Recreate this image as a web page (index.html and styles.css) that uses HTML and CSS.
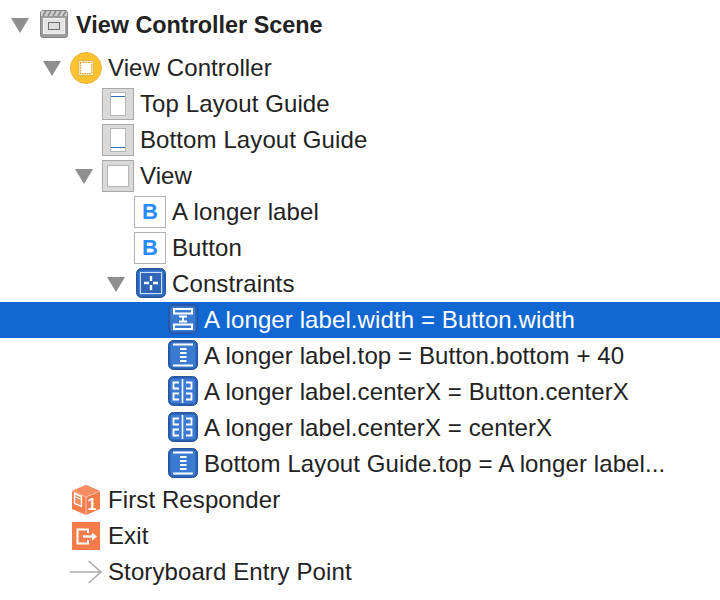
FILE: index.html
```html
<!DOCTYPE html>
<html lang="en">
<head>
  <meta charset="UTF-8">
  <title>Document Outline</title>
  <link rel="stylesheet" href="styles.css">
</head>
<body>
  <svg class="defs" width="0" height="0">
    <symbol id="scene" viewBox="0 0 32 32">
      <rect x="2.5" y="1.5" width="27" height="27" rx="2.5" fill="#9c9c9c" stroke="#858585"/>
      <rect x="3" y="2" width="26" height="5" fill="#cfcfcf"/>
      <path d="M5 7l3-5M10 7l3-5M15 7l3-5M20 7l3-5M25 7l3-5" stroke="#8a8a8a" stroke-width="1.6"/>
      <rect x="5.5" y="9.5" width="21" height="15" fill="#e4e4e4" stroke="#f2f2f2"/>
      <rect x="10.5" y="13.5" width="11" height="7" fill="#dcdcdc" stroke="#6f6f6f"/>
    </symbol>
    <symbol id="vc" viewBox="0 0 32 32">
      <circle cx="16" cy="16" r="15.5" fill="#fdc22e" stroke="#e9b64a"/>
      <rect x="8.5" y="8.5" width="15" height="15" fill="#f3e2ad" stroke="#e3b84f"/>
      <rect x="10.5" y="10.5" width="11" height="11" fill="#fff" stroke="#e8a21f" stroke-dasharray="1.5 1"/>
    </symbol>
    <symbol id="guide-top" viewBox="0 0 32 32">
      <rect x="0.5" y="0.5" width="31" height="31" fill="#d9d9d9" stroke="#a9a9a9"/>
      <rect x="8.5" y="4.5" width="15" height="23" fill="#fff" stroke="#b5b5b5"/>
      <path d="M9 8.500h14" stroke="#2f6fae"/>
    </symbol>
    <symbol id="guide-bottom" viewBox="0 0 32 32">
      <rect x="0.5" y="0.5" width="31" height="31" fill="#d9d9d9" stroke="#a9a9a9"/>
      <rect x="8.5" y="4.5" width="15" height="23" fill="#fff" stroke="#b5b5b5"/>
      <path d="M9 23.500h14" stroke="#2f6fae"/>
    </symbol>
    <symbol id="view" viewBox="0 0 32 32">
      <rect x="0.5" y="0.5" width="31" height="31" fill="#d9d9d9" stroke="#a9a9a9"/>
      <rect x="5.5" y="5.5" width="21" height="21" fill="#fff" stroke="#b5b5b5"/>
    </symbol>
    <symbol id="tile" viewBox="0 0 32 32">
      <rect x="2.5" y="0.5" width="29" height="29" rx="5" fill="#2a5fb0" stroke="#2555a0"/>
      <rect x="4.5" y="2.5" width="25" height="25" rx="2" fill="#3c7bd2"/>
    </symbol>
    <symbol id="folder" viewBox="0 0 32 32">
      <use href="#tile"/>
      <rect x="6.500" y="4.500" width="21" height="21" fill="#2f66b8" stroke="#cfe0f6"/>
      <path d="M17 8v5M17 17v5M10 15h5M19 15h5" stroke="#fff" stroke-width="2.400"/>
    </symbol>
    <symbol id="c-width" viewBox="0 0 32 32">
      <use href="#tile"/>
      <path d="M8 5h18v4.500H8zM8 20.500h18V25H8z" fill="#3c7bd2" stroke="#fff" stroke-width="2"/>
      <path d="M13 12.500h8M13 17.500h8M17 12v6" stroke="#fff" stroke-width="1.800"/>
    </symbol>
    <symbol id="c-height" viewBox="0 0 32 32">
      <use href="#tile"/>
      <path d="M7 4.500h20M7 25.500h20" stroke="#fff" stroke-width="1.800"/>
      <path d="M14 9h6.500M14 13h6.500M14 17h6.500M14 21h6.500" stroke="#fff" stroke-width="1.800"/>
    </symbol>
    <symbol id="c-center" viewBox="0 0 32 32">
      <use href="#tile"/>
      <path d="M16.500 3v24" stroke="#fff" stroke-width="1.600"/>
      <path d="M13 6.500H7.500v6H13M13 17.500H7.500v6H13M20 6.500h5.500v6H20M20 17.500h5.500v6H20" fill="none" stroke="#fff" stroke-width="1.800"/>
    </symbol>
    <symbol id="exit" viewBox="0 0 32 32">
      <rect x="2" y="2" width="28" height="28" fill="#f47c4b"/>
      <path d="M18 13V9.500H7.500v14H18V20" fill="none" stroke="#fff" stroke-width="2"/>
      <path d="M13 16.500h11" stroke="#fff" stroke-width="2.400"/>
      <path d="M22 12.500l5 4-5 4z" fill="#fff"/>
    </symbol>
    <symbol id="entry" viewBox="0 0 32 32">
      <path d="M0 16h31M18.500 5L31 16 18.500 27" fill="none" stroke="#adadad" stroke-width="1.600"/>
    </symbol>
  </svg>

  <ul class="outline">
    <li class="row scene lvl-0"><span class="toggle"></span><svg class="icon"><use href="#scene"/></svg><span class="name">View Controller Scene</span></li>
    <li class="row lvl-1"><span class="toggle"></span><svg class="icon"><use href="#vc"/></svg><span class="name">View Controller</span></li>
    <li class="row lvl-2"><span class="slot"></span><svg class="icon"><use href="#guide-top"/></svg><span class="name">Top Layout Guide</span></li>
    <li class="row lvl-2"><span class="slot"></span><svg class="icon"><use href="#guide-bottom"/></svg><span class="name">Bottom Layout Guide</span></li>
    <li class="row lvl-2"><span class="toggle"></span><svg class="icon"><use href="#view"/></svg><span class="name">View</span></li>
    <li class="row lvl-3"><span class="slot"></span><span class="icon btn-icon">B</span><span class="name">A longer label</span></li>
    <li class="row lvl-3"><span class="slot"></span><span class="icon btn-icon">B</span><span class="name">Button</span></li>
    <li class="row lvl-3"><span class="toggle"></span><svg class="icon"><use href="#folder"/></svg><span class="name">Constraints</span></li>
    <li class="row lvl-4 selected"><span class="slot"></span><svg class="icon"><use href="#c-width"/></svg><span class="name">A longer label.width = Button.width</span></li>
    <li class="row lvl-4"><span class="slot"></span><svg class="icon"><use href="#c-height"/></svg><span class="name">A longer label.top = Button.bottom + 40</span></li>
    <li class="row lvl-4"><span class="slot"></span><svg class="icon"><use href="#c-center"/></svg><span class="name">A longer label.centerX = Button.centerX</span></li>
    <li class="row lvl-4"><span class="slot"></span><svg class="icon"><use href="#c-center"/></svg><span class="name">A longer label.centerX = centerX</span></li>
    <li class="row lvl-4"><span class="slot"></span><svg class="icon"><use href="#c-height"/></svg><span class="name">Bottom Layout Guide.top = A longer label...</span></li>
    <li class="row lvl-1">
      <span class="slot"></span>
      <svg class="icon" viewBox="0 0 32 32">
        <path d="M16 1L2 7v18l14 6 14-6V7z" fill="#f47c4b"/>
        <path d="M16 1L2 7l14 6 14-6z" fill="#f68d62"/>
        <path d="M2 7l14 6 14-6M16 13v18" fill="none" stroke="#fbc3ab"/>
        <path d="M4.500 9.500l7 3v10l-7-3z" fill="#f68d62" stroke="#fff" stroke-width="1.400"/>
        <path d="M4.500 12.500l7 3" stroke="#fff"/>
        <text class="cube-num" x="22" y="26">1</text>
      </svg>
      <span class="name">First Responder</span>
    </li>
    <li class="row lvl-1"><span class="slot"></span><svg class="icon"><use href="#exit"/></svg><span class="name">Exit</span></li>
    <li class="row lvl-1"><span class="slot"></span><svg class="icon"><use href="#entry"/></svg><span class="name">Storyboard Entry Point</span></li>
  </ul>
</body>
</html>
```
FILE: styles.css
```css
body {
  margin: 0;
  background: #fff;
  color: #222;
  font-family: "Liberation Sans", Arial, sans-serif;
  font-size: 24px;
  letter-spacing: 0.1px;
}

.defs {
  display: block;
  height: 0;
}

.outline {
  list-style: none;
  margin: 0;
  padding: 7px 0 0;
}

.row {
  display: flex;
  align-items: center;
  height: 36px;
  white-space: nowrap;
}

.lvl-0 { padding-left: 6px; }
.lvl-1 { padding-left: 38px; }
.lvl-2 { padding-left: 70px; }
.lvl-3 { padding-left: 102px; }
.lvl-4 { padding-left: 134px; }

.scene {
  margin-bottom: 7px;
  font-size: 23.4px;
  font-weight: bold;
  letter-spacing: 0;
}

.selected {
  background: #1268d3;
  color: #fff;
}

.slot,
.toggle {
  width: 32px;
  height: 32px;
  flex: none;
}

.toggle {
  position: relative;
}

.toggle::before {
  content: "";
  position: absolute;
  left: 5px;
  top: 9px;
  border-style: solid;
  border-width: 15px 9px 0;
  border-color: #8f8f8f transparent transparent;
}

.icon {
  width: 32px;
  height: 32px;
  flex: none;
  margin-right: 6px;
}

.btn-icon {
  display: flex;
  align-items: center;
  justify-content: center;
  box-sizing: border-box;
  border: 1px solid #b0b0b0;
  background: #fff;
  color: #2a8bff;
  font-size: 22px;
  font-weight: bold;
}

.cube-num {
  fill: #fff;
  font-family: "Liberation Sans", Arial, sans-serif;
  font-size: 16px;
  font-weight: bold;
  text-anchor: middle;
}
```
